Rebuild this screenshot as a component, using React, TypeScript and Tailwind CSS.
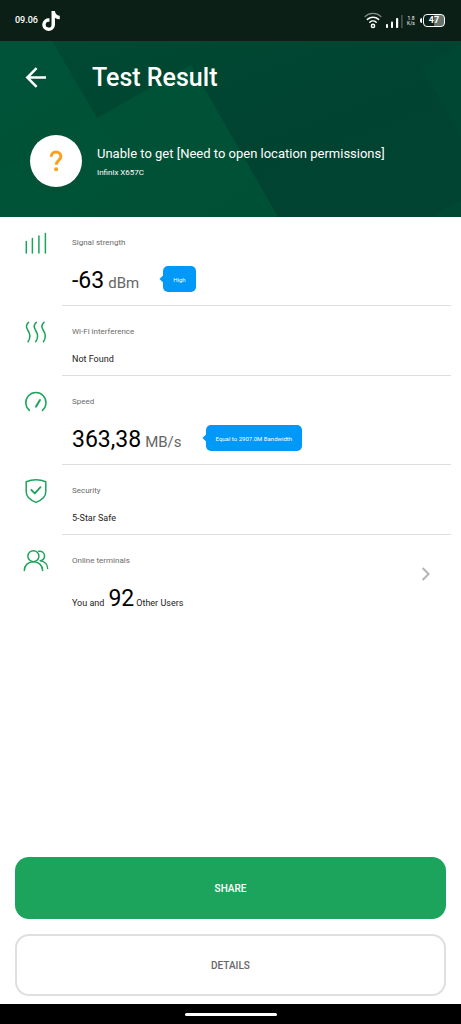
import type { ReactNode } from "react"
import { FaTiktok } from "react-icons/fa"

function StatusBar() {
  return (
    <div className="flex h-[41px] items-center justify-between bg-[#0c1f16] pr-4 pl-[15px] text-white">
      <div className="flex items-center gap-1">
        <span className="text-[9px] font-medium">09.06</span>
        <FaTiktok className="h-5 w-[18px]" />
      </div>
      <div className="flex items-center gap-1">
        <svg viewBox="0 0 18 17" className="h-[17px] w-[18px]" fill="none" stroke="currentColor" strokeLinecap="round">
          <path d="M1 4.6C5.4.3 12.6.3 17 4.6" strokeWidth="1.2" opacity=".5" />
          <path d="M3.4 7.4c3.2-3 8-3 11.2 0" strokeWidth="1.5" />
          <path d="M5.8 10.2c1.8-1.7 4.6-1.7 6.4 0" strokeWidth="1.5" />
          <circle cx="9" cy="13.9" r="1.6" strokeWidth="1.5" />
        </svg>
        <svg viewBox="0 0 17 14" className="h-3.5 w-[17px]" fill="currentColor">
          <rect x="0" y="10" width="2" height="4" rx=".8" />
          <rect x="5" y="7.5" width="2" height="6.5" rx=".8" />
          <rect x="10" y="4" width="2.2" height="10" rx=".8" />
          <rect x="15.4" y="1" width="1" height="13" opacity=".4" />
        </svg>
        <div className="flex w-2 flex-col items-center text-[5px] leading-[5px]">
          <span>1.8</span>
          <span>K/s</span>
        </div>
        <div className="flex items-center gap-px pl-px">
          <span className="h-[5px] w-[2px] rounded-l-sm bg-white" />
          <span className="flex h-[13px] w-[22px] items-center justify-center rounded border border-white bg-linear-to-r from-transparent from-50% to-[#66736d] to-50% text-[9px] font-bold">
            47
          </span>
        </div>
      </div>
    </div>
  )
}

function HeaderBackdrop() {
  return (
    <svg
      viewBox="0 0 461 176"
      preserveAspectRatio="xMinYMin slice"
      className="absolute inset-0 h-full w-full"
      aria-hidden="true"
    >
      <defs>
        <linearGradient id="shade" x1="0" y1="0" x2="1" y2="1">
          <stop offset="0" stopColor="#004a33" />
          <stop offset=".6" stopColor="#004330" />
          <stop offset="1" stopColor="#004431" />
        </linearGradient>
        <linearGradient id="facet" x1="0" y1="0" x2="1" y2="1">
          <stop offset="0" stopColor="#005338" />
          <stop offset="1" stopColor="#005035" />
        </linearGradient>
      </defs>
      <rect width="461" height="176" fill="url(#shade)" />
      <path d="M0 0h52l45 77 94-53 87 152H0z" fill="url(#facet)" />
      <path d="M97 77 0 130v46h90l44-26z" fill="#005639" opacity=".35" />
      <path d="M421 26l40-22v92z" fill="#004733" />
      <path d="M431 176l30-17v17z" fill="#004833" />
    </svg>
  )
}

function Header() {
  return (
    <header className="relative bg-[#004631] text-white">
      <HeaderBackdrop />
      <div className="relative pt-5 pb-[30px]">
        <div className="flex items-center pl-[25px]">
          <button type="button" aria-label="Back" className="w-[67px]">
            <svg viewBox="0 0 22 22" className="size-[22px]" fill="none" stroke="currentColor" strokeWidth="2.5">
              <path d="M21 10.5H2.8M11.6 1.2 2.3 10.500l9.300 9.300" />
            </svg>
          </button>
          <h1 className="text-[25px] leading-[34px] font-medium">Test Result</h1>
        </div>
        <div className="mt-10 flex gap-[15px] pl-[30px]">
          <div className="flex size-[52px] shrink-0 items-center justify-center rounded-full bg-white">
            <svg viewBox="0 0 14 22" className="h-[22px] w-3.5" fill="none">
              <path
                d="M2.2 6.8C2.2 3.9 4.300 2.100 7 2.100s4.900 1.800 4.900 4.500c0 3.600-4.700 4-4.700 8.100"
                stroke="#f9a11b"
                strokeWidth="3"
              />
              <circle cx="7.1" cy="19.2" r="2" fill="#f9a11b" />
            </svg>
          </div>
          <div className="pt-[9px]">
            <p className="text-[13px] leading-5">Unable to get [Need to open location permissions]</p>
            <p className="text-[8px] leading-[18px]">Infinix X657C</p>
          </div>
        </div>
      </div>
    </header>
  )
}

function RowIcon({ children }: { children: ReactNode }) {
  return (
    <svg
      viewBox="0 0 24 24"
      className="size-6 overflow-visible text-[#1ca45c]"
      fill="none"
      stroke="currentColor"
      strokeWidth="1.5"
      strokeLinecap="round"
      strokeLinejoin="round"
    >
      {children}
    </svg>
  )
}

const icons = {
  signal: (
    <RowIcon>
      <path d="M2.3 10.4v11.7M8.4 7.4v14.7M14.9 5v17.1M21.4 2.4v19.7" />
    </RowIcon>
  ),
  waves: (
    <RowIcon>
      <path d="M4.6 2.3c-3 2.4-2.8 4.8-.6 8.2 2.7 4.2 3 7.2 0 11.2" />
      <path d="M12.3 2.3c-3 2.4-2.8 4.8-.6 8.2 2.7 4.2 3 7.2 0 11.2" />
      <path d="M20 2.3c-3 2.4-2.8 4.8-.6 8.2 2.7 4.2 3 7.2 0 11.2" />
    </RowIcon>
  ),
  gauge: (
    <RowIcon>
      <path d="M5.4 20.4a10.1 10.1 0 1 1 13 0" />
      <path d="M12 16.6 16 10" strokeWidth="2" />
    </RowIcon>
  ),
  shield: (
    <RowIcon>
      <path d="M12 .8c3.2 0 7 .8 9.8 1.9v10.1c0 5-4.6 8.6-9.8 10.6-5.2-2-9.8-5.6-9.8-10.6V2.7C5 1.6 8.8.8 12 .8z" />
      <path d="m7.4 11 3.4 3.300 5.700-6.200" strokeWidth="1.8" />
    </RowIcon>
  ),
  users: (
    <RowIcon>
      <circle cx="9.4" cy="7.2" r="5.5" />
      <path d="M.3 21.6c0-5.4 4-8.9 9.1-8.9s9.2 3.5 9.2 8.9" />
      <path d="M14.8 2.3c3.1-.7 5.7 1.6 5.7 4.6 0 2.4-1.7 4.4-4.3 4.8 4.3.5 7.4 3.6 7.4 7.9" />
    </RowIcon>
  ),
}

function Row({ icon, label, last, children }: { icon: ReactNode; label: string; last?: boolean; children: ReactNode }) {
  return (
    <section className="flex">
      <div className="w-[62px] shrink-0 pt-3.5 pl-6">{icon}</div>
      <div className={`mr-2.5 flex-1 pt-5 pl-2.5 ${last ? "" : "border-b border-[#dfdfdf]"}`}>
        <h2 className="text-[8px] leading-3 text-[#6b6b6b]">{label}</h2>
        {children}
      </div>
    </section>
  )
}

function Reading({ value, unit, note }: { value: string; unit: string; note: string }) {
  return (
    <div className="mt-[17px] flex items-start gap-6 pb-[9px]">
      <p className="flex items-baseline gap-1 text-[23px] leading-[30px] text-black">
        {value}
        <span className="text-[15px] leading-none text-[#666]">{unit}</span>
      </p>
      <div className="relative flex h-[26px] items-center rounded-[5px] bg-[#0099f8] px-2.5 text-[6px] text-white">
        <span className="absolute top-1/2 left-0 size-[5px] -translate-x-1/2 -translate-y-1/2 rotate-45 bg-[#0099f8]" />
        {note}
      </div>
    </div>
  )
}

function Verdict({ children }: { children: ReactNode }) {
  return <p className="mt-3.5 pb-[9px] text-[9px] leading-3.5 text-[#222]">{children}</p>
}

export default function App() {
  return (
    <div className="flex min-h-screen flex-col bg-white font-[Roboto,sans-serif]">
      <StatusBar />
      <Header />
      <main className="flex-1">
        <Row icon={icons.signal} label="Signal strength">
          <Reading value="-63" unit="dBm" note="High" />
        </Row>
        <Row icon={icons.waves} label="Wi-Fi interference">
          <Verdict>Not Found</Verdict>
        </Row>
        <Row icon={icons.gauge} label="Speed">
          <Reading value="363,38" unit="MB/s" note="Equal to 2907.0M Bandwidth" />
        </Row>
        <Row icon={icons.shield} label="Security">
          <Verdict>5-Star Safe</Verdict>
        </Row>
        <div className="flex items-start">
          <div className="flex-1">
            <Row icon={icons.users} label="Online terminals" last>
              <p className="mt-[17px] flex items-baseline text-[9px] leading-none text-[#222]">
                You and
                <span className="mr-0.5 ml-1 text-[23px] leading-[30px] text-black">92</span>
                Other Users
              </p>
            </Row>
          </div>
          <button type="button" aria-label="Show online terminals" className="pt-8 pr-[30px]">
            <svg viewBox="0 0 10 14" className="h-3.5 w-2.5" fill="none" stroke="#b5b5b5" strokeWidth="2">
              <path d="m1.6 1 6 6-6 6" />
            </svg>
          </button>
        </div>
      </main>
      <div className="flex flex-col gap-[15px] px-[15px] pb-2">
        <button type="button" className="h-[62px] rounded-[14px] bg-[#1ca45c] text-[10px] font-medium text-white">
          SHARE
        </button>
        <button
          type="button"
          className="h-[62px] rounded-[14px] border-2 border-[#dfdfdf] bg-white text-[10px] font-medium text-[#666]"
        >
          DETAILS
        </button>
      </div>
      <div className="flex h-5 items-center justify-center bg-black">
        <span className="h-[3px] w-[92px] rounded-full bg-white" />
      </div>
    </div>
  )
}
